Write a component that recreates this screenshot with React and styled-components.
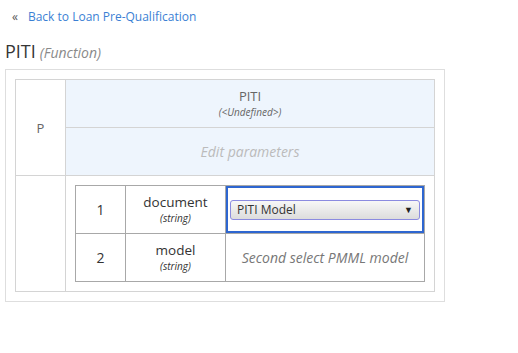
import styled, { createGlobalStyle } from "styled-components";

const GlobalStyle = createGlobalStyle`
  body {
    margin: 0;
    background: #fff;
    font-family: "Open Sans", "Liberation Sans", sans-serif;
    color: #333;
  }
`;

const Page = styled.div`
  padding: 0 5px;
`;

const Nav = styled.div`
  height: 32px;
  display: flex;
  align-items: center;
  padding-left: 7px;
  gap: 10px;
  font-size: 12px;
`;

const Chevrons = styled.span`
  color: #555;
  font-size: 12px;
`;

const BackLink = styled.a`
  color: #3b7fd4;
  text-decoration: none;
  cursor: pointer;
`;

const Title = styled.h2`
  margin: 7px 0 6px;
  height: 24px;
  display: flex;
  align-items: baseline;
  font-size: 18px;
  line-height: 24px;
  font-weight: 400;
  color: #363636;
`;

const Kind = styled.span`
  font-size: 14px;
  font-style: italic;
  color: #8a8a8a;
  margin-left: 4px;
`;

const Panel = styled.div`
  width: 420px;
  padding: 9px;
  border: 1px solid #dedede;
`;

const Grid = styled.table`
  width: 420px;
  border-collapse: collapse;
  table-layout: fixed;
`;

const Cell = styled.td`
  border: 1px solid #d4d4d4;
  text-align: center;
  vertical-align: middle;
  padding: 0;
  height: ${(p) => p.h || 47}px;
  background: ${(p) => (p.tinted ? "#eef5fd" : "#fff")};
  color: #666;
  font-size: 13px;
`;

const Name = styled.div`
  font-size: 13px;
  color: #666;
  line-height: 17px;
`;

const TypeHint = styled.div`
  font-size: 10px;
  font-style: italic;
  color: #666;
  line-height: 14px;
`;

const Placeholder = styled.span`
  font-style: italic;
  font-size: 14px;
  color: ${(p) => p.color || "#bbb"};
`;

const Nested = styled.table`
  width: 350px;
  border-collapse: collapse;
  table-layout: fixed;
  margin: 0 auto;
`;

const NCell = styled.td`
  border: 1px solid #a8a8a8;
  height: 47px;
  padding: 0;
  text-align: center;
  vertical-align: middle;
  color: #333;
  font-size: 14px;
  box-shadow: ${(p) => (p.active ? "inset 0 0 0 2px #2e66d0" : "none")};
`;

const ParamName = styled.div`
  font-size: 13.5px;
  line-height: 17px;
  color: #333;
`;

const ParamType = styled.div`
  font-size: 10px;
  font-style: italic;
  line-height: 14px;
  color: #333;
`;

const SelectBox = styled.div`
  width: 190px;
  height: 20px;
  box-sizing: border-box;
  margin: 0 auto;
  display: flex;
  align-items: center;
  justify-content: space-between;
  padding: 0 6px;
  border: 1px solid #8b8be0;
  border-radius: 3px;
  background: linear-gradient(#f7f7f7, #dcdcdc);
  font-size: 12px;
  color: #333;
`;

const Arrow = styled.span`
  font-size: 9px;
  color: #222;
`;

const params = [
  { idx: 1, name: "document", type: "string", select: true },
  { idx: 2, name: "model", type: "string" },
];

export default function App() {
  return (
    <Page>
      <GlobalStyle />
      <Nav>
        <Chevrons>«</Chevrons>
        <BackLink>Back to Loan Pre-Qualification</BackLink>
      </Nav>
      <Title>
        PITI<Kind>(Function)</Kind>
      </Title>
      <Panel>
        <Grid>
          <colgroup>
            <col style={{ width: 50 }} />
            <col />
          </colgroup>
          <tbody>
            <tr>
              <Cell rowSpan={2}>P</Cell>
              <Cell tinted>
                <Name>PITI</Name>
                <TypeHint>(&lt;Undefined&gt;)</TypeHint>
              </Cell>
            </tr>
            <tr>
              <Cell tinted>
                <Placeholder>Edit parameters</Placeholder>
              </Cell>
            </tr>
            <tr>
              <Cell h={115} />
              <Cell h={115}>
                <Nested>
                  <colgroup>
                    <col style={{ width: 50 }} />
                    <col style={{ width: 100 }} />
                    <col />
                  </colgroup>
                  <tbody>
                    {params.map((p) => (
                      <tr key={p.idx}>
                        <NCell>{p.idx}</NCell>
                        <NCell>
                          <ParamName>{p.name}</ParamName>
                          <ParamType>({p.type})</ParamType>
                        </NCell>
                        <NCell active={p.select}>
                          {p.select ? (
                            <SelectBox>
                              <span>PITI Model</span>
                              <Arrow>▼</Arrow>
                            </SelectBox>
                          ) : (
                            <Placeholder color="#777">
                              Second select PMML model
                            </Placeholder>
                          )}
                        </NCell>
                      </tr>
                    ))}
                  </tbody>
                </Nested>
              </Cell>
            </tr>
          </tbody>
        </Grid>
      </Panel>
    </Page>
  );
}
